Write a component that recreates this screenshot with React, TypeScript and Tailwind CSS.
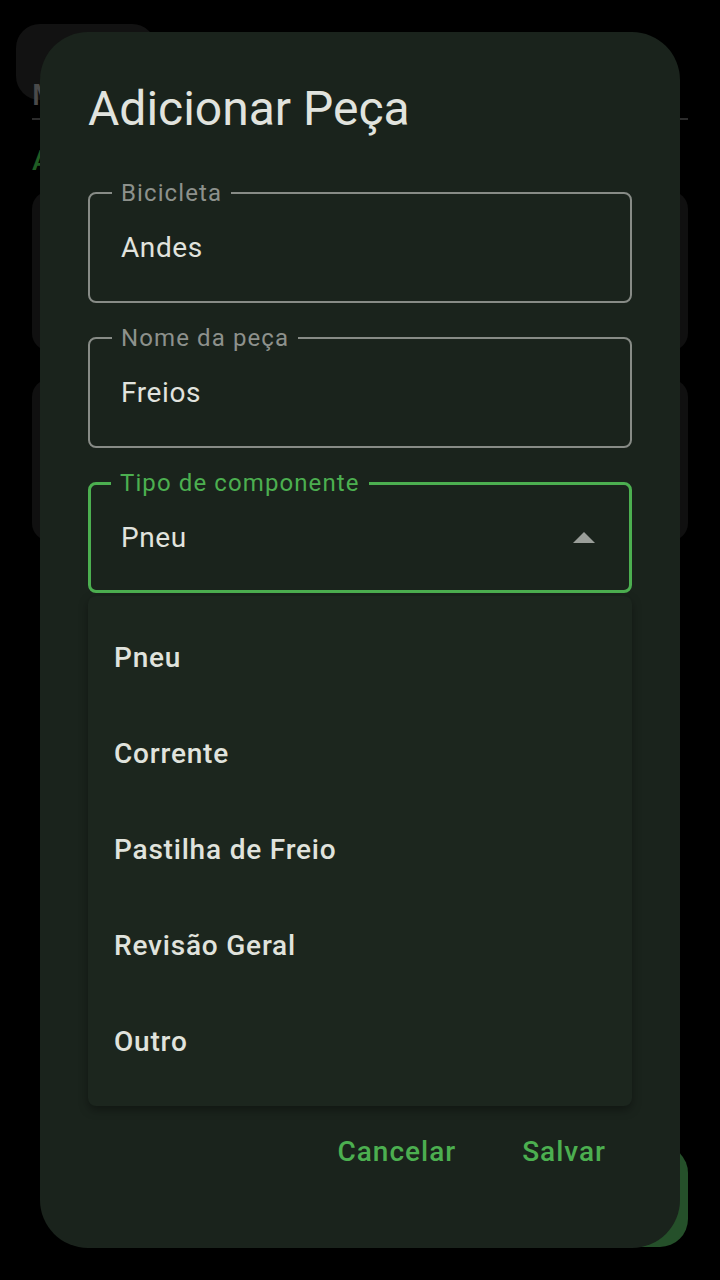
import React from 'react';

const options = ['Pneu', 'Corrente', 'Pastilha de Freio', 'Revisão Geral', 'Outro'];

const OutlinedField: React.FC<{ label: string; value: string }> = ({ label, value }) => (
    <div className="relative h-[111px] rounded-[8px] border-2 border-[#878b86] flex items-center pl-[31px]">
        <span className="absolute left-[22px] -top-[15px] px-[9px] bg-[#1a231c] text-[24px] leading-[28px] tracking-[1.1px] text-[#8d918c]">
            {label}
        </span>
        <span className="text-[28px] tracking-[0.6px] text-[#e1e3de]">{value}</span>
    </div>
);

export default function App() {
    return (
        <div className="relative w-[720px] h-[1280px] overflow-hidden bg-black font-['Roboto',sans-serif]">
            {/* app behind the scrim */}
            <div className="px-[32px] pt-[24px]">
                <div className="relative h-[94px] flex items-end pb-[6px]">
                    <div className="absolute -left-[16px] top-0 w-[140px] h-[76px] rounded-[24px] bg-[#121212]" />
                    <span className="relative text-[30px] leading-[34px] font-medium text-[#4a4a4a]">M</span>
                </div>
                <div className="h-[2px] bg-[#2c2c2c]" />
                <div className="mt-[25px] text-[28px] leading-[32px] font-medium text-[#1f5c23]">A</div>
                <div className="mt-[14px] h-[160px] rounded-[18px] bg-[#101010]" />
                <div className="mt-[28px] h-[162px] rounded-[18px] bg-[#101010]" />
            </div>
            <div className="absolute right-[32px] bottom-[33px] w-[98px] h-[102px] rounded-[28px] bg-[#25502a]" />

            {/* dialog */}
            <div className="absolute left-[40px] top-[32px] w-[640px] h-[1216px] rounded-[48px] bg-[#1a231c] px-[48px] pt-[49px] flex flex-col">
                <h1 className="text-[48px] leading-[56px] text-[#e1e3de]">Adicionar Peça</h1>

                <div className="mt-[55px] flex flex-col gap-[34px]">
                    <OutlinedField label="Bicicleta" value="Andes" />
                    <OutlinedField label="Nome da peça" value="Freios" />

                    <div className="relative">
                        <div className="relative h-[111px] rounded-[8px] border-[3.5px] border-[#4caf50] flex items-center justify-between pl-[30px] pr-[34px]">
                            <span className="absolute left-[20px] -top-[16px] px-[9px] bg-[#1a231c] text-[24px] leading-[28px] tracking-[1.1px] text-[#4caf50]">
                                Tipo de componente
                            </span>
                            <span className="text-[28px] tracking-[0.6px] text-[#e1e3de]">Pneu</span>
                            <svg width="22" height="11" viewBox="0 0 22 11">
                                <polygon points="0,11 11,0 22,11" fill="#9a9e99" />
                            </svg>
                        </div>

                        <div className="absolute left-0 right-0 top-full mt-[3px] z-10 rounded-[8px] bg-[#1c261e] pt-[14px] pb-[16px] shadow-[0_4px_10px_rgba(0,0,0,0.35)]">
                            {options.map((o) => (
                                <div key={o} className="h-[96px] flex items-center pl-[26px] text-[28px] font-medium tracking-[0.8px] text-[#e0e3dd]">
                                    {o}
                                </div>
                            ))}
                        </div>
                    </div>
                </div>

                <div className="mt-auto mb-[72px] flex justify-end gap-[14px]">
                    <button className="h-[48px] px-[26px] text-[28px] font-medium tracking-[1px] text-[#4caf50]">Cancelar</button>
                    <button className="h-[48px] px-[26px] text-[28px] font-medium tracking-[1px] text-[#4caf50]">Salvar</button>
                </div>
            </div>
        </div>
    );
}
